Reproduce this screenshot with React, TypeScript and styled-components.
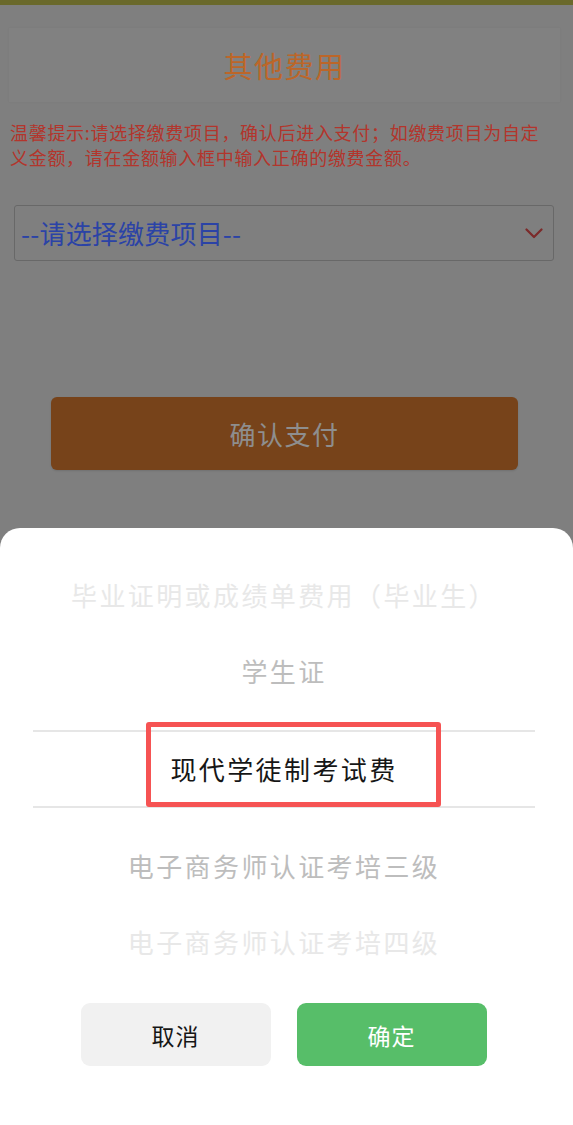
import styled, { createGlobalStyle } from 'styled-components'

const GlobalStyle = createGlobalStyle`
  html, body {
    margin: 0;
    padding: 0;
    background: #7f7f7f;
    font-family: 'Noto Sans CJK SC', 'Noto Sans', sans-serif;
  }
  * {
    box-sizing: border-box;
  }
`

const items = [
  { label: '毕业证明或成绩单费用（毕业生）', tone: 'far' },
  { label: '学生证', tone: 'near' },
  { label: '现代学徒制考试费', tone: 'active' },
  { label: '电子商务师认证考培三级', tone: 'near' },
  { label: '电子商务师认证考培四级', tone: 'far' },
] as const

type Tone = 'far' | 'near' | 'active'

const toneColor: Record<Tone, string> = {
  far: '#e8e8e8',
  near: '#bdbdbd',
  active: '#161616',
}

const App = () => {
  return (
    <>
      <GlobalStyle />
      <Page>
        <TopBar />
        <Header>
          <Title>其他费用</Title>
        </Header>
        <Tip>
          温馨提示:请选择缴费项目，确认后进入支付；如缴费项目为自定义金额，请在金额输入框中输入正确的缴费金额。
        </Tip>
        <SelectBox>
          <SelectText>--请选择缴费项目--</SelectText>
          <svg width="18" height="11" viewBox="0 0 18 11">
            <polyline
              points="1.5,1.5 9,9 16.5,1.5"
              fill="none"
              stroke="#7c2a2a"
              strokeWidth="2.2"
              strokeLinecap="round"
              strokeLinejoin="round"
            />
          </svg>
        </SelectBox>
        <PayButton>确认支付</PayButton>
      </Page>

      <Sheet>
        <Picker>
          {items.map((item) =>
            item.tone === 'active' ? (
              <SelectedRow key={item.label}>
                <ItemText $tone={item.tone}>{item.label}</ItemText>
                <Highlight />
              </SelectedRow>
            ) : (
              <Row key={item.label}>
                <ItemText $tone={item.tone}>{item.label}</ItemText>
              </Row>
            )
          )}
        </Picker>
        <Actions>
          <ActionButton $primary={false}>取消</ActionButton>
          <ActionButton $primary>确定</ActionButton>
        </Actions>
      </Sheet>
    </>
  )
}

const Page = styled.div`
  min-height: 1125px;
  background: #7f7f7f;
  display: flex;
  flex-direction: column;
`

const TopBar = styled.div`
  height: 5px;
  background: #6a692b;
`

const Header = styled.div`
  margin: 23px 13px 0 9px;
  height: 74px;
  display: flex;
  align-items: center;
  justify-content: center;
  background: #818181;
  box-shadow: 0 0 2px rgba(0, 0, 0, 0.06);
`

const Title = styled.h1`
  margin: 0;
  font-size: 29px;
  font-weight: 400;
  letter-spacing: 1.5px;
  color: #bc6629;
  line-height: 1;
`

const Tip = styled.p`
  margin: 0;
  padding: 18px 22px 0 10px;
  font-size: 18px;
  letter-spacing: 0.7px;
  line-height: 25px;
  color: #b3352c;
`

const SelectBox = styled.div`
  margin: 35px 19px 0 14px;
  height: 56px;
  border: 1px solid #686868;
  border-radius: 3px;
  display: flex;
  align-items: center;
  justify-content: space-between;
  padding: 0 10px 0 6px;
`

const SelectText = styled.span`
  font-size: 26px;
  letter-spacing: 0.2px;
  color: #2b43a6;
  line-height: 1;
`

const PayButton = styled.button`
  margin: 136px 55px 0 51px;
  height: 73px;
  border: none;
  border-radius: 6px;
  background: #77431a;
  color: #8e8e8e;
  font-family: inherit;
  font-size: 26px;
  letter-spacing: 1.5px;
  box-shadow: 0 1px 2px rgba(0, 0, 0, 0.12);
`

const Sheet = styled.div`
  position: fixed;
  left: 0;
  right: 0;
  bottom: 0;
  height: 597px;
  background: #ffffff;
  border-radius: 20px 20px 0 0;
  padding-top: 29px;
  display: flex;
  flex-direction: column;
`

const Picker = styled.div`
  display: flex;
  flex-direction: column;
  padding: 0 38px 0 33px;
`

const Row = styled.div`
  height: 76px;
  display: flex;
  align-items: center;
  justify-content: center;
`

const SelectedRow = styled(Row)`
  position: relative;
  height: 78px;
  margin: 21px 0 20px;
  border-top: 2px solid #e6e6e6;
  border-bottom: 2px solid #e6e6e6;
`

const ItemText = styled.span<{ $tone: Tone }>`
  font-size: 26px;
  letter-spacing: 2.4px;
  line-height: 1;
  color: ${(p) => toneColor[p.$tone]};
`

const Highlight = styled.div`
  position: absolute;
  left: 113px;
  top: -10px;
  width: 295px;
  height: 85px;
  border: 5px solid #f65353;
  border-radius: 3px;
  pointer-events: none;
`

const Actions = styled.div`
  margin-top: 23px;
  display: flex;
  justify-content: center;
  gap: 26px;
  padding-right: 6px;
`

const ActionButton = styled.button<{ $primary: boolean }>`
  width: 190px;
  height: 63px;
  border: none;
  border-radius: 9px;
  background: ${(p) => (p.$primary ? '#57be69' : '#f1f1f1')};
  color: ${(p) => (p.$primary ? '#ffffff' : '#161616')};
  font-family: inherit;
  font-size: 23px;
  letter-spacing: 1px;
`

export default App
